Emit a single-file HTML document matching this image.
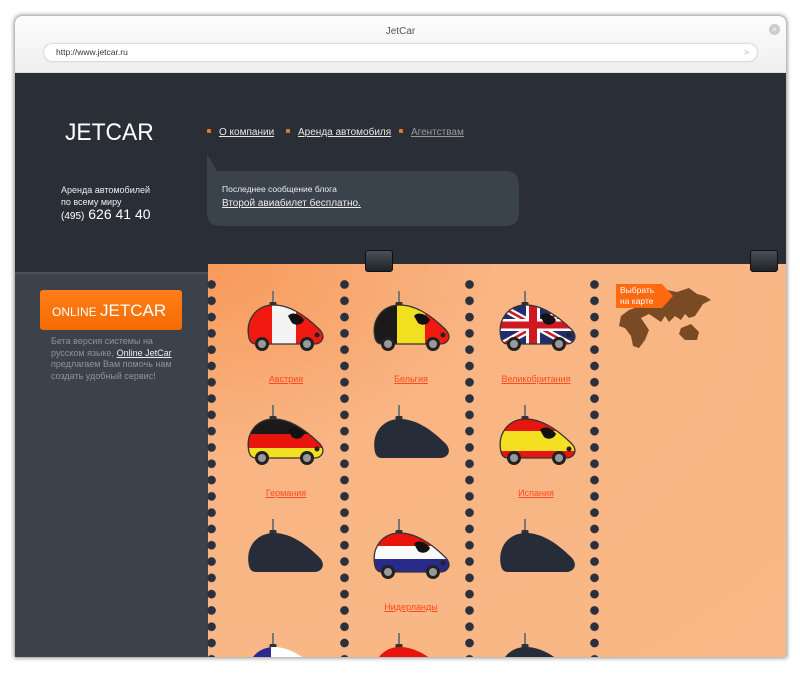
<!DOCTYPE html>
<html><head><meta charset="utf-8">
<style>
*{margin:0;padding:0;box-sizing:border-box}
body{width:800px;height:700px;background:#fff;position:relative;overflow:hidden;font-family:"Liberation Sans",Arial,sans-serif}
.win{position:absolute;left:15px;top:16px;width:771px;height:641px;border-radius:7px 7px 0 0;box-shadow:0 0 4px 1px rgba(0,0,0,.45);overflow:hidden;background:#2a2f37}
.bar{position:absolute;left:0;top:0;width:771px;height:57px;background:linear-gradient(#fdfdfd,#efefef);border-bottom:1px solid #ddd}
.title{position:absolute;top:10px;width:100%;text-align:center;font-size:10px;color:#555}
.url{position:absolute;left:29px;top:28px;width:713px;height:17px;border-radius:9px;background:#fff;box-shadow:0 0 2px rgba(0,0,0,.3);font-size:8.5px;color:#333;padding:3px 0 0 12px}
.close{position:absolute;left:754px;top:8px;width:11px;height:11px;border-radius:50%;background:#ccc;color:#fff;font-size:8px;text-align:center;line-height:11px}
.a{position:absolute}
.nav{font-size:10px;color:#e8e8e8;text-decoration:underline}
.nav i{display:inline-block;width:4px;height:4px;background:#e07a2a;border-radius:1px;margin-right:8px;vertical-align:2px}
.lbl{position:absolute;font-size:9px;color:#ff4a1c;text-decoration:underline;text-align:center;width:100px}
.dots{position:absolute;width:9px;height:400px;background:radial-gradient(circle at 4.5px 4.5px,#2a313c 4px,transparent 4.6px) 0 0/9px 16.3px repeat-y}
</style></head><body>
<svg width="0" height="0" style="position:absolute">
<defs>
<clipPath id="cb"><path d="M5,48 C1,30 12,15 30,15 C47,15 63,27 76,40 C82,47 78,54 70,54 L12,54 C8,54 6,52 5,48Z"/></clipPath>
<symbol id="body" viewBox="0 0 80 64"><rect x="28" y="1" width="2" height="15" fill="#777"/><rect x="25.5" y="12" width="7" height="4" rx="1" fill="#333"/></symbol>
<symbol id="extras" viewBox="0 0 80 64">
<path d="M5,48 C1,30 12,15 30,15 C47,15 63,27 76,40 C82,47 78,54 70,54 L12,54 C8,54 6,52 5,48Z" fill="none" stroke="#333" stroke-width="1.3"/>
<path d="M44,26 C48,21 56,24 60,30 C58,35 52,36 48,33Z" fill="#111"/>
<circle cx="73" cy="45" r="2.5" fill="#222"/>
<circle cx="18" cy="54" r="7" fill="#222"/><circle cx="18" cy="54" r="4" fill="#999"/>
<circle cx="63" cy="54" r="7" fill="#222"/><circle cx="63" cy="54" r="4" fill="#999"/>
</symbol>
</defs></svg>
<div class="win">
<div class="bar"><div class="title">JetCar</div><div class="url">http://www.jetcar.ru<span style="position:absolute;right:8px;color:#aaa">&gt;</span></div><div class="close">×</div></div>
<div class="a" style="left:0;top:256px;width:193px;height:385px;background:#3b424b;border-top:2px solid #4a525c"></div>
<div class="a" style="left:50px;top:103px;font-size:24px;color:#fff;transform:scaleX(.95);transform-origin:left">JETCAR</div>
<div class="a" style="left:46px;top:168px;font-size:9px;color:#eee;line-height:12px">Аренда автомобилей<br>по всему миру</div>
<div class="a" style="left:46px;top:190px;font-size:14px;color:#fff"><span style="font-size:10px">(495)</span> 626 41 40</div>
<div class="a nav" style="left:192px;top:111px"><i></i>О компании</div>
<div class="a nav" style="left:271px;top:111px"><i></i>Аренда автомобиля</div>
<div class="a nav" style="left:384px;top:111px;color:#999"><i></i>Агентствам</div>
<svg class="a" style="left:192px;top:138px" width="312" height="72"><path d="M0,0 L10,17 L298,17 Q312,17 312,31 L312,58 Q312,72 298,72 L14,72 Q0,72 0,58Z" fill="#3a424c"/></svg>
<div class="a" style="left:207px;top:168px;font-size:8.5px;color:#eee">Последнее сообщение блога</div>
<div class="a" style="left:207px;top:182px;font-size:10px;color:#eee;text-decoration:underline">Второй авиабилет бесплатно.</div>
<div class="a" style="left:25px;top:274px;width:142px;height:40px;border-radius:3px;background:linear-gradient(#ff7e1c,#f56c00);color:#fff;font-size:12px;padding:11px 0 0 12px;white-space:nowrap">ONLINE <span style="font-size:17px">JETCAR</span></div>
<div class="a" style="left:36px;top:320px;font-size:9px;color:#8d949c;line-height:11.5px">Бета версия системы на<br>русском языке, <u style="color:#eee">Online JetCar</u><br>предлагаем Вам помочь нам<br>создать удобный сервис!</div>
<div class="a" style="left:193px;top:248px;width:578px;height:393px;background:radial-gradient(ellipse at 0 0,#f79a5a,#f9b584 35%,#f9b887)"></div>
<div class="a" style="left:350px;top:234px;width:28px;height:22px;border-radius:3px;background:linear-gradient(#4a5058,#1e2328);border:1px solid #111"></div>
<div class="a" style="left:735px;top:234px;width:28px;height:22px;border-radius:3px;background:linear-gradient(#4a5058,#1e2328);border:1px solid #111"></div>
<div class="dots" style="left:192px;top:264px"></div>
<div class="dots" style="left:325px;top:264px"></div>
<div class="dots" style="left:450px;top:264px"></div>
<div class="dots" style="left:575px;top:264px"></div>
<svg class="a" style="left:600px;top:268px" width="100" height="80"><path d="M40,12 L52,6 L62,8 L74,4 L82,10 L90,12 L96,16 L88,20 L84,26 L80,32 L74,34 L70,30 L66,36 L60,32 L54,38 L50,32 L46,38 L40,34 L34,30 L26,34 L30,40 L34,46 L30,56 L24,64 L18,62 L16,52 L10,44 L4,42 L6,32 L14,26 L20,24 L26,20 L34,16Z M66,44 L76,40 L84,48 L82,56 L70,56 L64,50Z" fill="#7a4a24"/></svg>
<svg class="a" style="left:601px;top:268px" width="58" height="24"><path d="M0,0 L46,0 L57,12 L46,24 L0,24Z" fill="#ff6a10"/></svg>
<div class="a" style="left:605px;top:269px;font-size:8.5px;color:#fff;line-height:10.5px">Выбрать<br>на карте</div>
<svg class="a" style="left:0;top:0" width="771" height="641">
<g transform="translate(229,274)"><use href="#body" width="80" height="64"/><g clip-path="url(#cb)"><rect width="80" height="64" fill="#f01a10"/><rect x="28" width="24" height="64" fill="#f4f4f4"/></g><use href="#extras" width="80" height="64"/></g>
<g transform="translate(355,274)"><use href="#body" width="80" height="64"/><g clip-path="url(#cb)"><rect width="80" height="64" fill="#f01a10"/><rect width="27" height="64" fill="#1a1a1a"/><rect x="27" width="28" height="64" fill="#f0e020"/></g><use href="#extras" width="80" height="64"/></g>
<g transform="translate(481,274)"><use href="#body" width="80" height="64"/><g clip-path="url(#cb)"><rect width="80" height="64" fill="#232c6e"/><path d="M0,14 L80,58 M0,58 L80,14" stroke="#fff" stroke-width="7"/><path d="M0,14 L80,58 M0,58 L80,14" stroke="#d01820" stroke-width="2.5"/><rect x="30" width="14" height="64" fill="#fff"/><rect y="29" width="80" height="12" fill="#fff"/><rect x="33" width="8" height="64" fill="#d01820"/><rect y="31.5" width="80" height="7" fill="#d01820"/></g><use href="#extras" width="80" height="64"/></g>
<g transform="translate(229,388)"><use href="#body" width="80" height="64"/><g clip-path="url(#cb)"><rect width="80" height="64" fill="#1a1a1a"/><rect y="30" width="80" height="14" fill="#e8140e"/><rect y="44" width="80" height="20" fill="#f4e020"/></g><use href="#extras" width="80" height="64"/></g>
<g transform="translate(355,388)"><use href="#body" width="80" height="64"/><path d="M5,48 C1,30 12,15 30,15 C47,15 63,27 76,40 C82,47 78,54 70,54 L12,54 C8,54 6,52 5,48Z" fill="#272d38"/></g>
<g transform="translate(481,388)"><use href="#body" width="80" height="64"/><g clip-path="url(#cb)"><rect width="80" height="64" fill="#e8140e"/><rect y="27" width="80" height="20" fill="#f4e020"/></g><use href="#extras" width="80" height="64"/></g>
<g transform="translate(229,502)"><use href="#body" width="80" height="64"/><path d="M5,48 C1,30 12,15 30,15 C47,15 63,27 76,40 C82,47 78,54 70,54 L12,54 C8,54 6,52 5,48Z" fill="#272d38"/></g>
<g transform="translate(355,502)"><use href="#body" width="80" height="64"/><g clip-path="url(#cb)"><rect width="80" height="64" fill="#e8140e"/><rect y="28" width="80" height="13" fill="#fafafa"/><rect y="41" width="80" height="23" fill="#2a2a8a"/></g><use href="#extras" width="80" height="64"/></g>
<g transform="translate(481,502)"><use href="#body" width="80" height="64"/><path d="M5,48 C1,30 12,15 30,15 C47,15 63,27 76,40 C82,47 78,54 70,54 L12,54 C8,54 6,52 5,48Z" fill="#272d38"/></g>
<g transform="translate(229,616)"><use href="#body" width="80" height="64"/><g clip-path="url(#cb)"><rect width="80" height="64" fill="#fff"/><rect width="27" height="64" fill="#2a2a8a"/></g></g>
<g transform="translate(355,616)"><use href="#body" width="80" height="64"/><g clip-path="url(#cb)"><rect width="80" height="64" fill="#e8140e"/></g></g>
<g transform="translate(481,616)"><use href="#body" width="80" height="64"/><path d="M5,48 C1,30 12,15 30,15 C47,15 63,27 76,40 C82,47 78,54 70,54 L12,54 C8,54 6,52 5,48Z" fill="#272d38"/></g>
</svg>
<div class="lbl" style="left:221px;top:358px">Австрия</div>
<div class="lbl" style="left:346px;top:358px">Бельгия</div>
<div class="lbl" style="left:471px;top:358px">Великобритания</div>
<div class="lbl" style="left:221px;top:472px">Германия</div>
<div class="lbl" style="left:471px;top:472px">Испания</div>
<div class="lbl" style="left:346px;top:586px">Нидерланды</div>
</div>
</body></html>
